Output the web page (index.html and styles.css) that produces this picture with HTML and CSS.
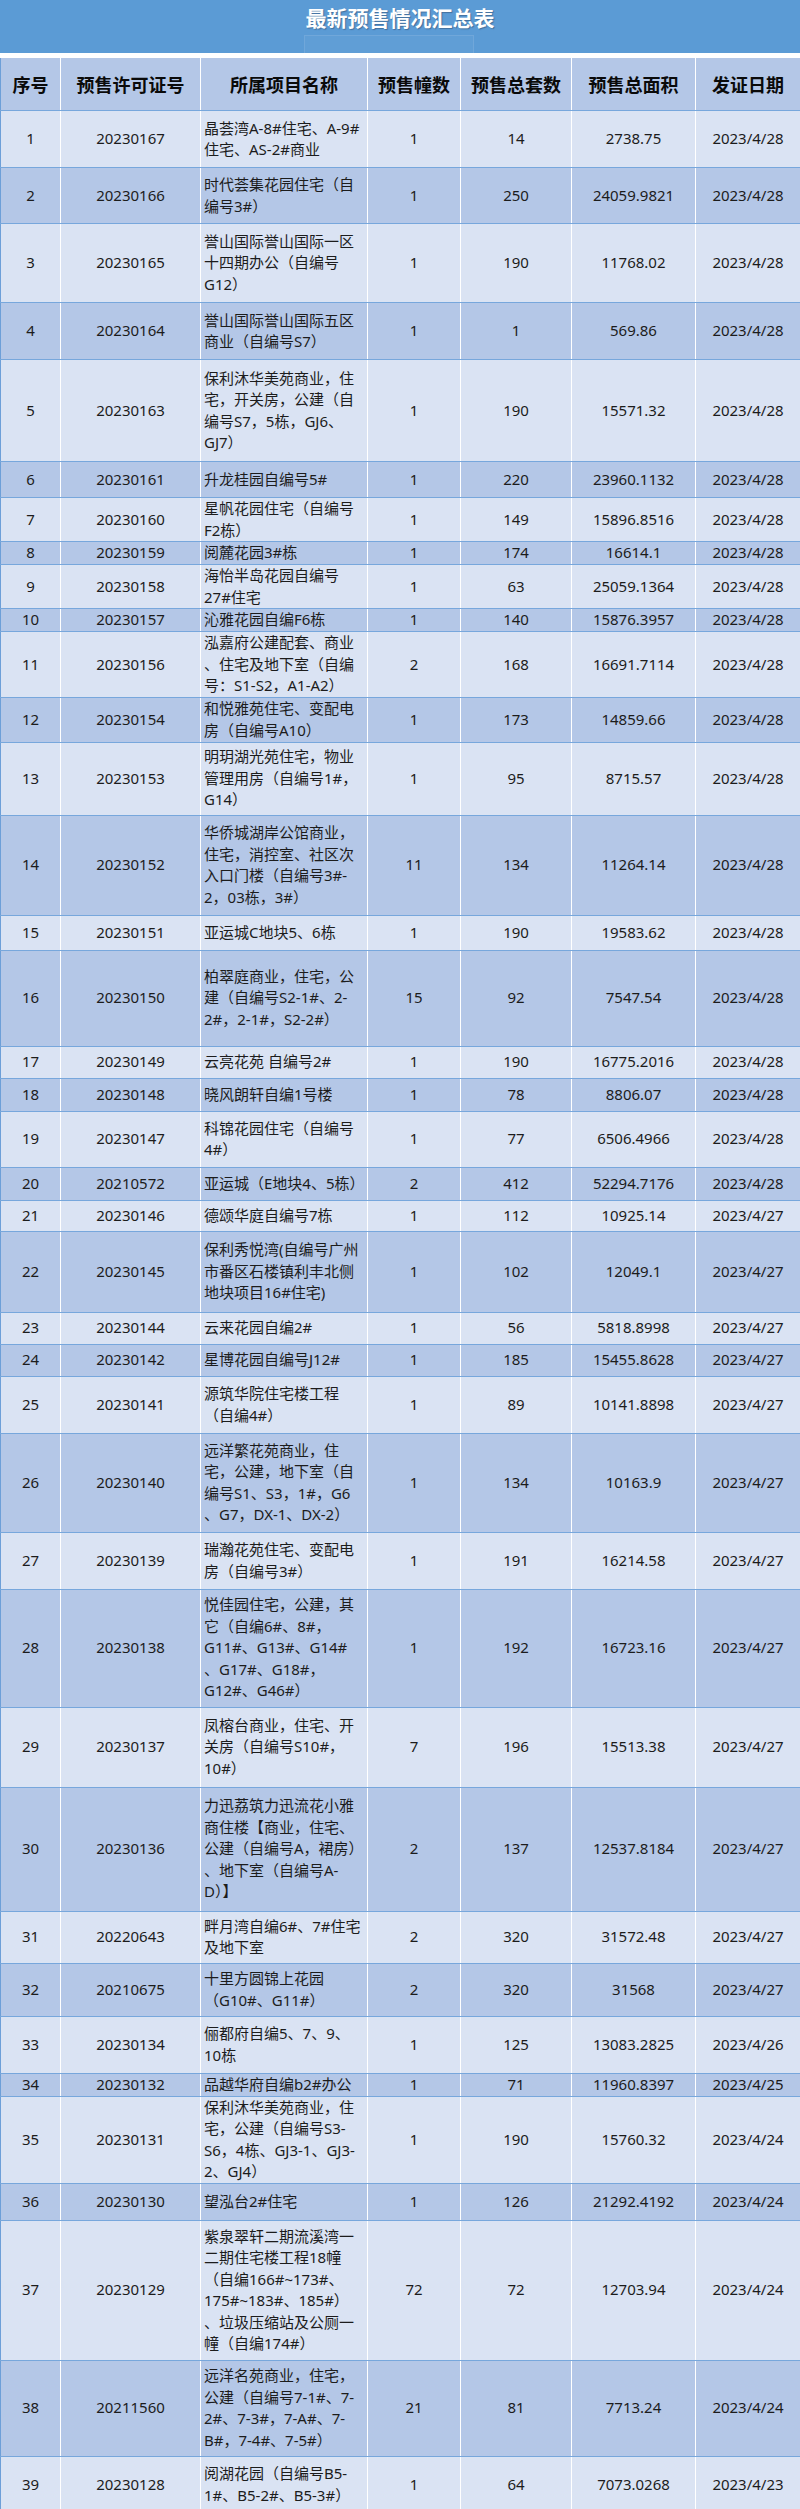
FILE: index.html
```html
<!DOCTYPE html>
<html lang="zh-CN">
<head>
<meta charset="utf-8">
<title>最新预售情况汇总表</title>
<link rel="stylesheet" href="styles.css">
</head>
<body>
<div class="page">
  <header class="title-bar">
    <h1 class="title">最新预售情况汇总表</h1>
    <div class="title-note"></div>
  </header>
  <div class="gap"></div>
  <table class="sheet">
    <colgroup>
      <col class="c-no"><col class="c-permit"><col class="c-name"><col class="c-bld"><col class="c-units"><col class="c-area"><col class="c-date">
    </colgroup>
    <thead>
      <tr class="head">
        <th>序号</th><th>预售许可证号</th><th>所属项目名称</th><th>预售幢数</th><th>预售总套数</th><th>预售总面积</th><th>发证日期</th>
      </tr>
    </thead>
    <tbody>
      <tr class="r1"><td>1</td><td>20230167</td><td class="name">晶荟湾A-8#住宅、A-9#<br>住宅、AS-2#商业</td><td>1</td><td>14</td><td>2738.75</td><td>2023/4/28</td></tr>
      <tr class="r2"><td>2</td><td>20230166</td><td class="name">时代荟集花园住宅（自<br>编号3#）</td><td>1</td><td>250</td><td>24059.9821</td><td>2023/4/28</td></tr>
      <tr class="r3"><td>3</td><td>20230165</td><td class="name">誉山国际誉山国际一区<br>十四期办公（自编号<br>G12）</td><td>1</td><td>190</td><td>11768.02</td><td>2023/4/28</td></tr>
      <tr class="r4"><td>4</td><td>20230164</td><td class="name">誉山国际誉山国际五区<br>商业（自编号S7）</td><td>1</td><td>1</td><td>569.86</td><td>2023/4/28</td></tr>
      <tr class="r5"><td>5</td><td>20230163</td><td class="name">保利沐华美苑商业，住<br>宅，开关房，公建（自<br>编号S7，5栋，GJ6、<br>GJ7）</td><td>1</td><td>190</td><td>15571.32</td><td>2023/4/28</td></tr>
      <tr class="r6"><td>6</td><td>20230161</td><td class="name">升龙桂园自编号5#</td><td>1</td><td>220</td><td>23960.1132</td><td>2023/4/28</td></tr>
      <tr class="r7"><td>7</td><td>20230160</td><td class="name">星帆花园住宅（自编号<br>F2栋）</td><td>1</td><td>149</td><td>15896.8516</td><td>2023/4/28</td></tr>
      <tr class="r8"><td>8</td><td>20230159</td><td class="name">阅麓花园3#栋</td><td>1</td><td>174</td><td>16614.1</td><td>2023/4/28</td></tr>
      <tr class="r9"><td>9</td><td>20230158</td><td class="name">海怡半岛花园自编号<br>27#住宅</td><td>1</td><td>63</td><td>25059.1364</td><td>2023/4/28</td></tr>
      <tr class="r10"><td>10</td><td>20230157</td><td class="name">沁雅花园自编F6栋</td><td>1</td><td>140</td><td>15876.3957</td><td>2023/4/28</td></tr>
      <tr class="r11"><td>11</td><td>20230156</td><td class="name">泓嘉府公建配套、商业<br>、住宅及地下室（自编<br>号：S1-S2，A1-A2）</td><td>2</td><td>168</td><td>16691.7114</td><td>2023/4/28</td></tr>
      <tr class="r12"><td>12</td><td>20230154</td><td class="name">和悦雅苑住宅、变配电<br>房（自编号A10）</td><td>1</td><td>173</td><td>14859.66</td><td>2023/4/28</td></tr>
      <tr class="r13"><td>13</td><td>20230153</td><td class="name">明玥湖光苑住宅，物业<br>管理用房（自编号1#，<br>G14）</td><td>1</td><td>95</td><td>8715.57</td><td>2023/4/28</td></tr>
      <tr class="r14"><td>14</td><td>20230152</td><td class="name">华侨城湖岸公馆商业，<br>住宅，消控室、社区次<br>入口门楼（自编号3#-<br>2，03栋，3#）</td><td>11</td><td>134</td><td>11264.14</td><td>2023/4/28</td></tr>
      <tr class="r15"><td>15</td><td>20230151</td><td class="name">亚运城C地块5、6栋</td><td>1</td><td>190</td><td>19583.62</td><td>2023/4/28</td></tr>
      <tr class="r16"><td>16</td><td>20230150</td><td class="name">柏翠庭商业，住宅，公<br>建（自编号S2-1#、2-<br>2#，2-1#，S2-2#）</td><td>15</td><td>92</td><td>7547.54</td><td>2023/4/28</td></tr>
      <tr class="r17"><td>17</td><td>20230149</td><td class="name">云亮花苑 自编号2#</td><td>1</td><td>190</td><td>16775.2016</td><td>2023/4/28</td></tr>
      <tr class="r18"><td>18</td><td>20230148</td><td class="name">晓风朗轩自编1号楼</td><td>1</td><td>78</td><td>8806.07</td><td>2023/4/28</td></tr>
      <tr class="r19"><td>19</td><td>20230147</td><td class="name">科锦花园住宅（自编号<br>4#）</td><td>1</td><td>77</td><td>6506.4966</td><td>2023/4/28</td></tr>
      <tr class="r20"><td>20</td><td>20210572</td><td class="name">亚运城（E地块4、5栋）</td><td>2</td><td>412</td><td>52294.7176</td><td>2023/4/28</td></tr>
      <tr class="r21"><td>21</td><td>20230146</td><td class="name">德颂华庭自编号7栋</td><td>1</td><td>112</td><td>10925.14</td><td>2023/4/27</td></tr>
      <tr class="r22"><td>22</td><td>20230145</td><td class="name">保利秀悦湾(自编号广州<br>市番区石楼镇利丰北侧<br>地块项目16#住宅)</td><td>1</td><td>102</td><td>12049.1</td><td>2023/4/27</td></tr>
      <tr class="r23"><td>23</td><td>20230144</td><td class="name">云来花园自编2#</td><td>1</td><td>56</td><td>5818.8998</td><td>2023/4/27</td></tr>
      <tr class="r24"><td>24</td><td>20230142</td><td class="name">星博花园自编号J12#</td><td>1</td><td>185</td><td>15455.8628</td><td>2023/4/27</td></tr>
      <tr class="r25"><td>25</td><td>20230141</td><td class="name">源筑华院住宅楼工程<br>（自编4#）</td><td>1</td><td>89</td><td>10141.8898</td><td>2023/4/27</td></tr>
      <tr class="r26"><td>26</td><td>20230140</td><td class="name">远洋繁花苑商业，住<br>宅，公建，地下室（自<br>编号S1、S3，1#，G6<br>、G7，DX-1、DX-2）</td><td>1</td><td>134</td><td>10163.9</td><td>2023/4/27</td></tr>
      <tr class="r27"><td>27</td><td>20230139</td><td class="name">瑞瀚花苑住宅、变配电<br>房（自编号3#）</td><td>1</td><td>191</td><td>16214.58</td><td>2023/4/27</td></tr>
      <tr class="r28"><td>28</td><td>20230138</td><td class="name">悦佳园住宅，公建，其<br>它（自编6#、8#，<br>G11#、G13#、G14#<br>、G17#、G18#，<br>G12#、G46#）</td><td>1</td><td>192</td><td>16723.16</td><td>2023/4/27</td></tr>
      <tr class="r29"><td>29</td><td>20230137</td><td class="name">凤榕台商业，住宅、开<br>关房（自编号S10#，<br>10#）</td><td>7</td><td>196</td><td>15513.38</td><td>2023/4/27</td></tr>
      <tr class="r30"><td>30</td><td>20230136</td><td class="name">力迅荔筑力迅流花小雅<br>商住楼【商业，住宅、<br>公建（自编号A，裙房）<br>、地下室（自编号A-<br>D）】</td><td>2</td><td>137</td><td>12537.8184</td><td>2023/4/27</td></tr>
      <tr class="r31"><td>31</td><td>20220643</td><td class="name">畔月湾自编6#、7#住宅<br>及地下室</td><td>2</td><td>320</td><td>31572.48</td><td>2023/4/27</td></tr>
      <tr class="r32"><td>32</td><td>20210675</td><td class="name">十里方圆锦上花园<br>（G10#、G11#）</td><td>2</td><td>320</td><td>31568</td><td>2023/4/27</td></tr>
      <tr class="r33"><td>33</td><td>20230134</td><td class="name">俪都府自编5、7、9、<br>10栋</td><td>1</td><td>125</td><td>13083.2825</td><td>2023/4/26</td></tr>
      <tr class="r34"><td>34</td><td>20230132</td><td class="name">品越华府自编b2#办公</td><td>1</td><td>71</td><td>11960.8397</td><td>2023/4/25</td></tr>
      <tr class="r35"><td>35</td><td>20230131</td><td class="name">保利沐华美苑商业，住<br>宅，公建（自编号S3-<br>S6，4栋、GJ3-1、GJ3-<br>2、GJ4）</td><td>1</td><td>190</td><td>15760.32</td><td>2023/4/24</td></tr>
      <tr class="r36"><td>36</td><td>20230130</td><td class="name">望泓台2#住宅</td><td>1</td><td>126</td><td>21292.4192</td><td>2023/4/24</td></tr>
      <tr class="r37"><td>37</td><td>20230129</td><td class="name">紫泉翠轩二期流溪湾一<br>二期住宅楼工程18幢<br>（自编166#~173#、<br>175#~183#、185#）<br>、垃圾压缩站及公厕一<br>幢（自编174#）</td><td>72</td><td>72</td><td>12703.94</td><td>2023/4/24</td></tr>
      <tr class="r38"><td>38</td><td>20211560</td><td class="name">远洋名苑商业，住宅，<br>公建（自编号7-1#、7-<br>2#、7-3#，7-A#、7-<br>B#，7-4#、7-5#）</td><td>21</td><td>81</td><td>7713.24</td><td>2023/4/24</td></tr>
      <tr class="r39"><td>39</td><td>20230128</td><td class="name">阅湖花园（自编号B5-<br>1#、B5-2#、B5-3#）</td><td>1</td><td>64</td><td>7073.0268</td><td>2023/4/23</td></tr>
    </tbody>
  </table>
</div>
</body>
</html>
```

FILE: styles.css
```css
html, body {
  margin: 0;
  padding: 0;
  background: #ffffff;
}

.page {
  width: 800px;
  font-family: "Noto Sans", "Noto Sans CJK SC", sans-serif;
  color: #1c1c1c;
}

.title-bar {
  height: 53px;
  background: #5b9bd5;
  display: flex;
  flex-direction: column;
  box-sizing: border-box;
  padding-top: 5px;
}

.title {
  margin: 0;
  height: 25px;
  line-height: 25px;
  text-align: center;
  font-family: "Noto Sans CJK SC", sans-serif;
  font-size: 21px;
  font-weight: 700;
  color: #ffffff;
  text-shadow: 1px 1px 1px rgba(40, 60, 90, 0.45);
}

.title-note {
  margin-top: 5px;
  margin-left: 304px;
  width: 170px;
  height: 18px;
  box-sizing: border-box;
  border: 1px solid rgba(255, 255, 255, 0.10);
  border-bottom: none;
  background: rgba(255, 255, 255, 0.03);
}

.gap {
  height: 4px;
  background: #ffffff;
}

.sheet {
  width: 800px;
  table-layout: fixed;
  border-collapse: collapse;
  border-left: 1.5px solid #6d9fd8;
  border-right: 1.5px solid #6d9fd8;
}

.c-no { width: 60px; }
.c-permit { width: 140px; }
.c-name { width: 167px; }
.c-bld { width: 93px; }
.c-units { width: 111px; }
.c-area { width: 124px; }
.c-date { width: 105px; }

.sheet th,
.sheet td {
  padding: 0;
  text-align: center;
  vertical-align: middle;
  border-left: 1px solid #ffffff;
  border-right: 1px solid #ffffff;
  border-top: 1.5px solid #77a7dc;
  border-bottom: 1.5px solid #77a7dc;
  overflow: hidden;
}

.sheet th:first-child,
.sheet td:first-child {
  border-left: 1.5px solid #6d9fd8;
}

.sheet th:last-child,
.sheet td:last-child {
  border-right: 1.5px solid #6d9fd8;
}

.head th {
  height: 52px;
  background: #b4c7e7;
  border-top: 1px solid #ffffff;
  font-family: "Noto Sans CJK SC", sans-serif;
  font-size: 18px;
  font-weight: 700;
  color: #0a0a0a;
  letter-spacing: 0;
}

.sheet td {
  font-size: 15px;
  line-height: 21.5px;
}

.sheet td.name {
  text-align: left;
  padding-left: 3px;
  white-space: nowrap;
}

.sheet tbody tr:nth-child(odd) td { background: #dae3f3; }
.sheet tbody tr:nth-child(even) td { background: #b4c7e7; }

.r1 { height: 57px; }
.r2 { height: 56px; }
.r3 { height: 79px; }
.r4 { height: 57px; }
.r5 { height: 102px; }
.r6 { height: 36px; }
.r7 { height: 43px; }
.r8 { height: 23px; }
.r9 { height: 43px; }
.r10 { height: 23px; }
.r11 { height: 65px; }
.r12 { height: 45px; }
.r13 { height: 73px; }
.r14 { height: 100px; }
.r15 { height: 35px; }
.r16 { height: 96px; }
.r17 { height: 32px; }
.r18 { height: 33px; }
.r19 { height: 56px; }
.r20 { height: 33px; }
.r21 { height: 31px; }
.r22 { height: 81px; }
.r23 { height: 32px; }
.r24 { height: 32px; }
.r25 { height: 57px; }
.r26 { height: 99px; }
.r27 { height: 57px; }
.r28 { height: 118px; }
.r29 { height: 80px; }
.r30 { height: 124px; }
.r31 { height: 52px; }
.r32 { height: 53px; }
.r33 { height: 57px; }
.r34 { height: 23px; }
.r35 { height: 87px; }
.r36 { height: 37px; }
.r37 { height: 140px; }
.r38 { height: 96px; }
.r39 { height: 57px; }
```
